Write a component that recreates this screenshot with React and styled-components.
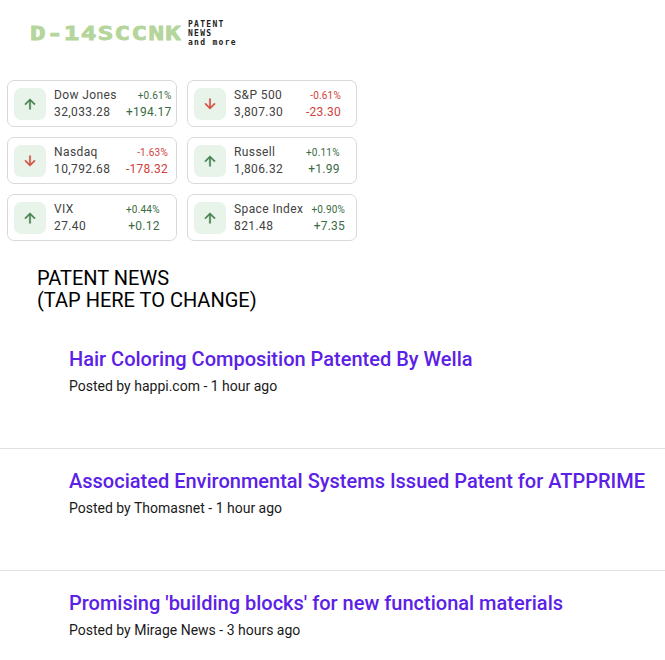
import React from "react"
import styled, {createGlobalStyle} from "styled-components"

const GlobalStyle = createGlobalStyle`
  html, body {
    margin: 0;
    height: 660px;
    overflow: hidden;
    background: #fff;
    font-family: Roboto, "Liberation Sans", sans-serif;
  }
`
const Header = styled.header`
  display: flex;
  align-items: center;
  height: 80px;
  padding: 0 0 14px 30px;
  box-sizing: border-box;
`
const LogoMark = styled.div`
  width: 158px;
  flex: none;
  padding-top: 2px;
`
const LogoText = styled.span`
  display: inline-block;
  font-family: "DejaVu Sans Mono", monospace;
  font-weight: 700;
  font-size: 19px;
  line-height: 14px;
  letter-spacing: 1px;
  color: #b4d59b;
  white-space: nowrap;
  transform: scaleX(1.36);
  transform-origin: left center;
  -webkit-text-stroke: 0.8px #b4d59b;
`
const Tagline = styled.div`
  font-family: "DejaVu Sans Mono", monospace;
  font-weight: 700;
  font-size: 8px;
  line-height: 9px;
  letter-spacing: 1.3px;
  color: #222;
`
const Tickers = styled.div`
  display: grid;
  grid-template-columns: 170px 170px;
  gap: 10px;
  padding-left: 7px;
`
const Card = styled.div`
  display: flex;
  align-items: center;
  height: 47px;
  box-sizing: border-box;
  padding: 0 6px;
  border: 1px solid #d9d9d9;
  border-radius: 7px;
`
const IconBox = styled.div`
  display: flex;
  align-items: center;
  justify-content: center;
  flex: none;
  width: 32px;
  height: 32px;
  margin-right: 8px;
  border-radius: 7px;
  background: #e8f3ea;
  color: ${p => (p.$up ? "#3e7f4a" : "#d24b3c")};

  svg {
    stroke: currentColor;
    stroke-width: 0.6;
  }
`
const Names = styled.div`
  min-width: 64px;
  margin-right: 8px;
  color: #424242;
  font-size: 12px;
  line-height: 17px;
  letter-spacing: 0.4px;
  white-space: nowrap;
`
const Changes = styled.div`
  text-align: right;
  white-space: nowrap;
  color: ${p => (p.$up ? "#3a6b44" : "#d0413c")};
`
const Percent = styled.div`
  font-size: 10px;
  line-height: 17px;
  letter-spacing: 0.2px;
`
const Delta = styled.div`
  font-size: 12px;
  line-height: 17px;
  letter-spacing: 0.25px;
`
const SectionTitle = styled.div`
  margin: 26px 0 0 37px;
  font-size: 20px;
  line-height: 22px;
  color: #000;
`
const NewsList = styled.div`
  margin-top: 16px;
`
const NewsItem = styled.article`
  box-sizing: border-box;
  height: 122px;
  padding: 20px 0 0 69px;
  border-bottom: 1px solid #e0e0e0;

  &:last-child {
    border-bottom: none;
  }
`
const NewsTitle = styled.div`
  font-size: 20px;
  font-weight: 500;
  line-height: 24px;
  color: #5b21e6;
  white-space: nowrap;
`
const NewsMeta = styled.div`
  margin-top: 5px;
  font-size: 14px;
  line-height: 20px;
  color: #1a1a1a;
`

const tickers = [
  {name: "Dow Jones", value: "32,033.28", pct: "+0.61%", delta: "+194.17", up: true},
  {name: "S&P 500", value: "3,807.30", pct: "-0.61%", delta: "-23.30", up: false},
  {name: "Nasdaq", value: "10,792.68", pct: "-1.63%", delta: "-178.32", up: false},
  {name: "Russell", value: "1,806.32", pct: "+0.11%", delta: "+1.99", up: true},
  {name: "VIX", value: "27.40", pct: "+0.44%", delta: "+0.12", up: true},
  {name: "Space Index", value: "821.48", pct: "+0.90%", delta: "+7.35", up: true},
]

const news = [
  {title: "Hair Coloring Composition Patented By Wella", meta: "Posted by happi.com - 1 hour ago"},
  {title: "Associated Environmental Systems Issued Patent for ATPPRIME", meta: "Posted by Thomasnet - 1 hour ago"},
  {title: "Promising 'building blocks' for new functional materials", meta: "Posted by Mirage News - 3 hours ago"},
]

function Arrow({up}) {
  return (
    <svg width="16" height="16" viewBox="0 0 24 24" fill="currentColor">
      {up
        ? <path d="M4 12l1.41 1.41L11 7.83V20h2V7.83l5.58 5.59L20 12l-8-8-8 8z"/>
        : <path d="M20 12l-1.41-1.41L13 16.17V4h-2v12.17l-5.58-5.59L4 12l8 8 8-8z"/>}
    </svg>
  )
}

function App() {
  return (
    <>
      <GlobalStyle/>
      <Header>
        <LogoMark><LogoText>D-14SCCNK</LogoText></LogoMark>
        <Tagline>PATENT<br/>NEWS<br/>and more</Tagline>
      </Header>
      <Tickers>
        {tickers.map(t => (
          <Card key={t.name}>
            <IconBox $up={t.up}><Arrow up={t.up}/></IconBox>
            <Names>{t.name}<br/>{t.value}</Names>
            <Changes $up={t.up}>
              <Percent>{t.pct}</Percent>
              <Delta>{t.delta}</Delta>
            </Changes>
          </Card>
        ))}
      </Tickers>
      <SectionTitle>PATENT NEWS<br/>(TAP HERE TO CHANGE)</SectionTitle>
      <NewsList>
        {news.map(n => (
          <NewsItem key={n.title}>
            <NewsTitle>{n.title}</NewsTitle>
            <NewsMeta>{n.meta}</NewsMeta>
          </NewsItem>
        ))}
      </NewsList>
    </>
  )
}

export default App
